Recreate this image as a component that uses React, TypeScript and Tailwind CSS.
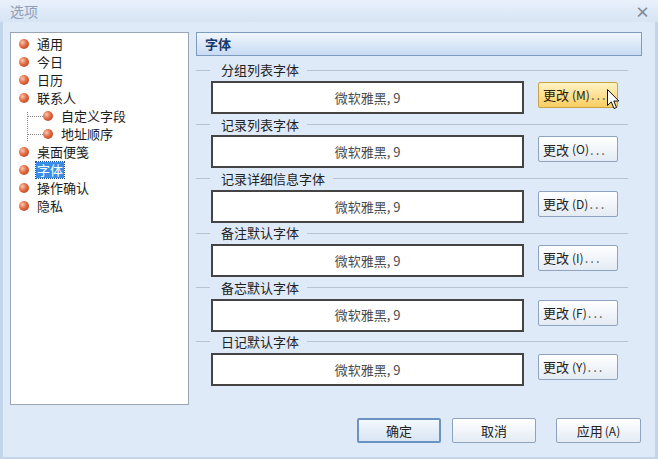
import React from "react";

const FONT = { fontFamily: '"Noto Sans CJK SC", "Noto Sans", sans-serif' };

const treeItems: { label: string; sub?: boolean; selected?: boolean }[] = [
  { label: "通用" },
  { label: "今日" },
  { label: "日历" },
  { label: "联系人" },
  { label: "自定义字段", sub: true },
  { label: "地址顺序", sub: true },
  { label: "桌面便笺" },
  { label: "字体", selected: true },
  { label: "操作确认" },
  { label: "隐私" },
];

const sections = [
  { title: "分组列表字体", key: "M", hot: true },
  { title: "记录列表字体", key: "O" },
  { title: "记录详细信息字体", key: "D" },
  { title: "备注默认字体", key: "I" },
  { title: "备忘默认字体", key: "F" },
  { title: "日记默认字体", key: "Y" },
];

function Bullet() {
  return (
    <span className="inline-block size-[10px] shrink-0 rounded-full bg-[radial-gradient(circle_at_35%_35%,#fcc6ad_0%,#e26840_45%,#a8391c_100%)]" />
  );
}

function Cursor() {
  return (
    <svg
      className="pointer-events-none absolute left-[69px] top-[7px]"
      width="13"
      height="21"
      viewBox="0 0 13 21"
    >
      <path
        d="M0.5 0.5 L0.5 16.5 L4.3 12.8 L7 19.5 L9.5 18.5 L6.8 12 L11.8 12 Z"
        fill="#fff"
        stroke="#111"
        strokeWidth="1"
        strokeLinejoin="round"
      />
    </svg>
  );
}

export default function App() {
  return (
    <div className="flex h-[459px] w-[658px] flex-col overflow-hidden bg-[#dfeaf8] text-[13px] text-[#1b1b1b]" style={FONT}>
      {/* title bar */}
      <div className="flex h-[22px] shrink-0 items-center justify-between bg-gradient-to-b from-[#e9f1fb] to-[#d6e4f4] pl-[10px] pr-[8px]">
        <span className="text-[14px] text-[#8e9fb6]">选项</span>
        <span className="text-[15px] font-bold leading-none text-[#7d8a99]">×</span>
      </div>

      {/* body */}
      <div className="flex flex-1 flex-col border-x-[3px] border-b-[2px] border-[#c3d5ea]">
        <div className="flex pl-[7px] pt-[10px]">
          {/* tree */}
          <div className="relative h-[373px] w-[179px] shrink-0 border border-[#9aa6b4] bg-white pt-[2px]">
            <div className="absolute left-[16px] top-[79px] h-[29px] border-l border-dotted border-[#8a8a8a]" />
            <div className="absolute left-[16px] top-[83px] w-[16px] border-t border-dotted border-[#8a8a8a]" />
            <div className="absolute left-[16px] top-[101px] w-[16px] border-t border-dotted border-[#8a8a8a]" />
            {treeItems.map((it) => (
              <div
                key={it.label}
                className={`flex h-[18px] items-center ${it.sub ? "pl-[32px]" : "pl-[8px]"}`}
              >
                <Bullet />
                <span
                  className={`ml-[7px] px-[1px] leading-[16px] ${
                    it.selected ? "bg-[#3a8ee8] text-white outline-1 outline-dotted outline-[#1e4f8a]" : ""
                  }`}
                >
                  {it.label}
                </span>
              </div>
            ))}
          </div>

          {/* right column */}
          <div className="ml-[7px] w-[446px] shrink-0">
            <div className="flex h-[24px] items-center border border-[#7e9cbe] bg-gradient-to-b from-[#f0f6fd] to-[#c8dbf3] pl-[8px] font-bold text-[#16386a]">
              字体
            </div>

            <div className="mt-[6px]">
              {sections.map((s) => (
                <div key={s.title} className="h-[54.4px]">
                  <div className="flex h-[16px] items-center pr-[14px]">
                    <div className="w-[14px] border-t border-[#b7c3d0]" />
                    <span className="ml-[11px] mr-[8px] text-[#222]">{s.title}</span>
                    <div className="flex-1 border-t border-[#b7c3d0]" />
                  </div>
                  <div className="mt-[3px] flex items-start pl-[15px]">
                    <div className="flex h-[33px] w-[313px] items-center justify-center border-[2px] border-[#444] bg-white text-[#4a4a4a]">
                      微软雅黑, 9
                    </div>
                    <div className="relative ml-[14px] mt-[1px]">
                      <button
                        type="button"
                        className={`flex h-[26px] w-[80px] items-center rounded-[2px] border pl-[4px] text-[13px] ${
                          s.hot
                            ? "border-[#c9a447] bg-gradient-to-b from-[#fff3c4] to-[#f8cd5e] text-[#2b2000]"
                            : "border-[#8ea3bd] bg-gradient-to-b from-[#ffffff] to-[#e4ebf4] text-[#222]"
                        }`}
                      >
                        更改<span className="ml-[3px] text-[12px]">({s.key})</span>
                        <span className="ml-[1px] tracking-[2px] text-[#555]">...</span>
                      </button>
                      {s.hot && <Cursor />}
                    </div>
                  </div>
                </div>
              ))}
            </div>
          </div>
        </div>

        {/* bottom buttons */}
        <div className="mt-[13px] flex justify-end pr-[14px]">
          <button
            type="button"
            className="h-[25px] w-[84px] rounded-[2px] border-[2px] border-[#6b93c2] bg-gradient-to-b from-[#f4f8fd] to-[#d8e5f4] text-[13px] text-[#222]"
          >
            确定
          </button>
          <button
            type="button"
            className="ml-[11px] h-[25px] w-[84px] rounded-[2px] border border-[#8ea3bd] bg-gradient-to-b from-[#ffffff] to-[#e4ebf4] text-[13px] text-[#222]"
          >
            取消
          </button>
          <button
            type="button"
            className="ml-[20px] h-[25px] w-[85px] rounded-[2px] border border-[#8ea3bd] bg-gradient-to-b from-[#ffffff] to-[#e4ebf4] text-[13px] text-[#222]"
          >
            应用<span className="ml-[2px] text-[12px]">(A)</span>
          </button>
        </div>
      </div>
    </div>
  );
}
